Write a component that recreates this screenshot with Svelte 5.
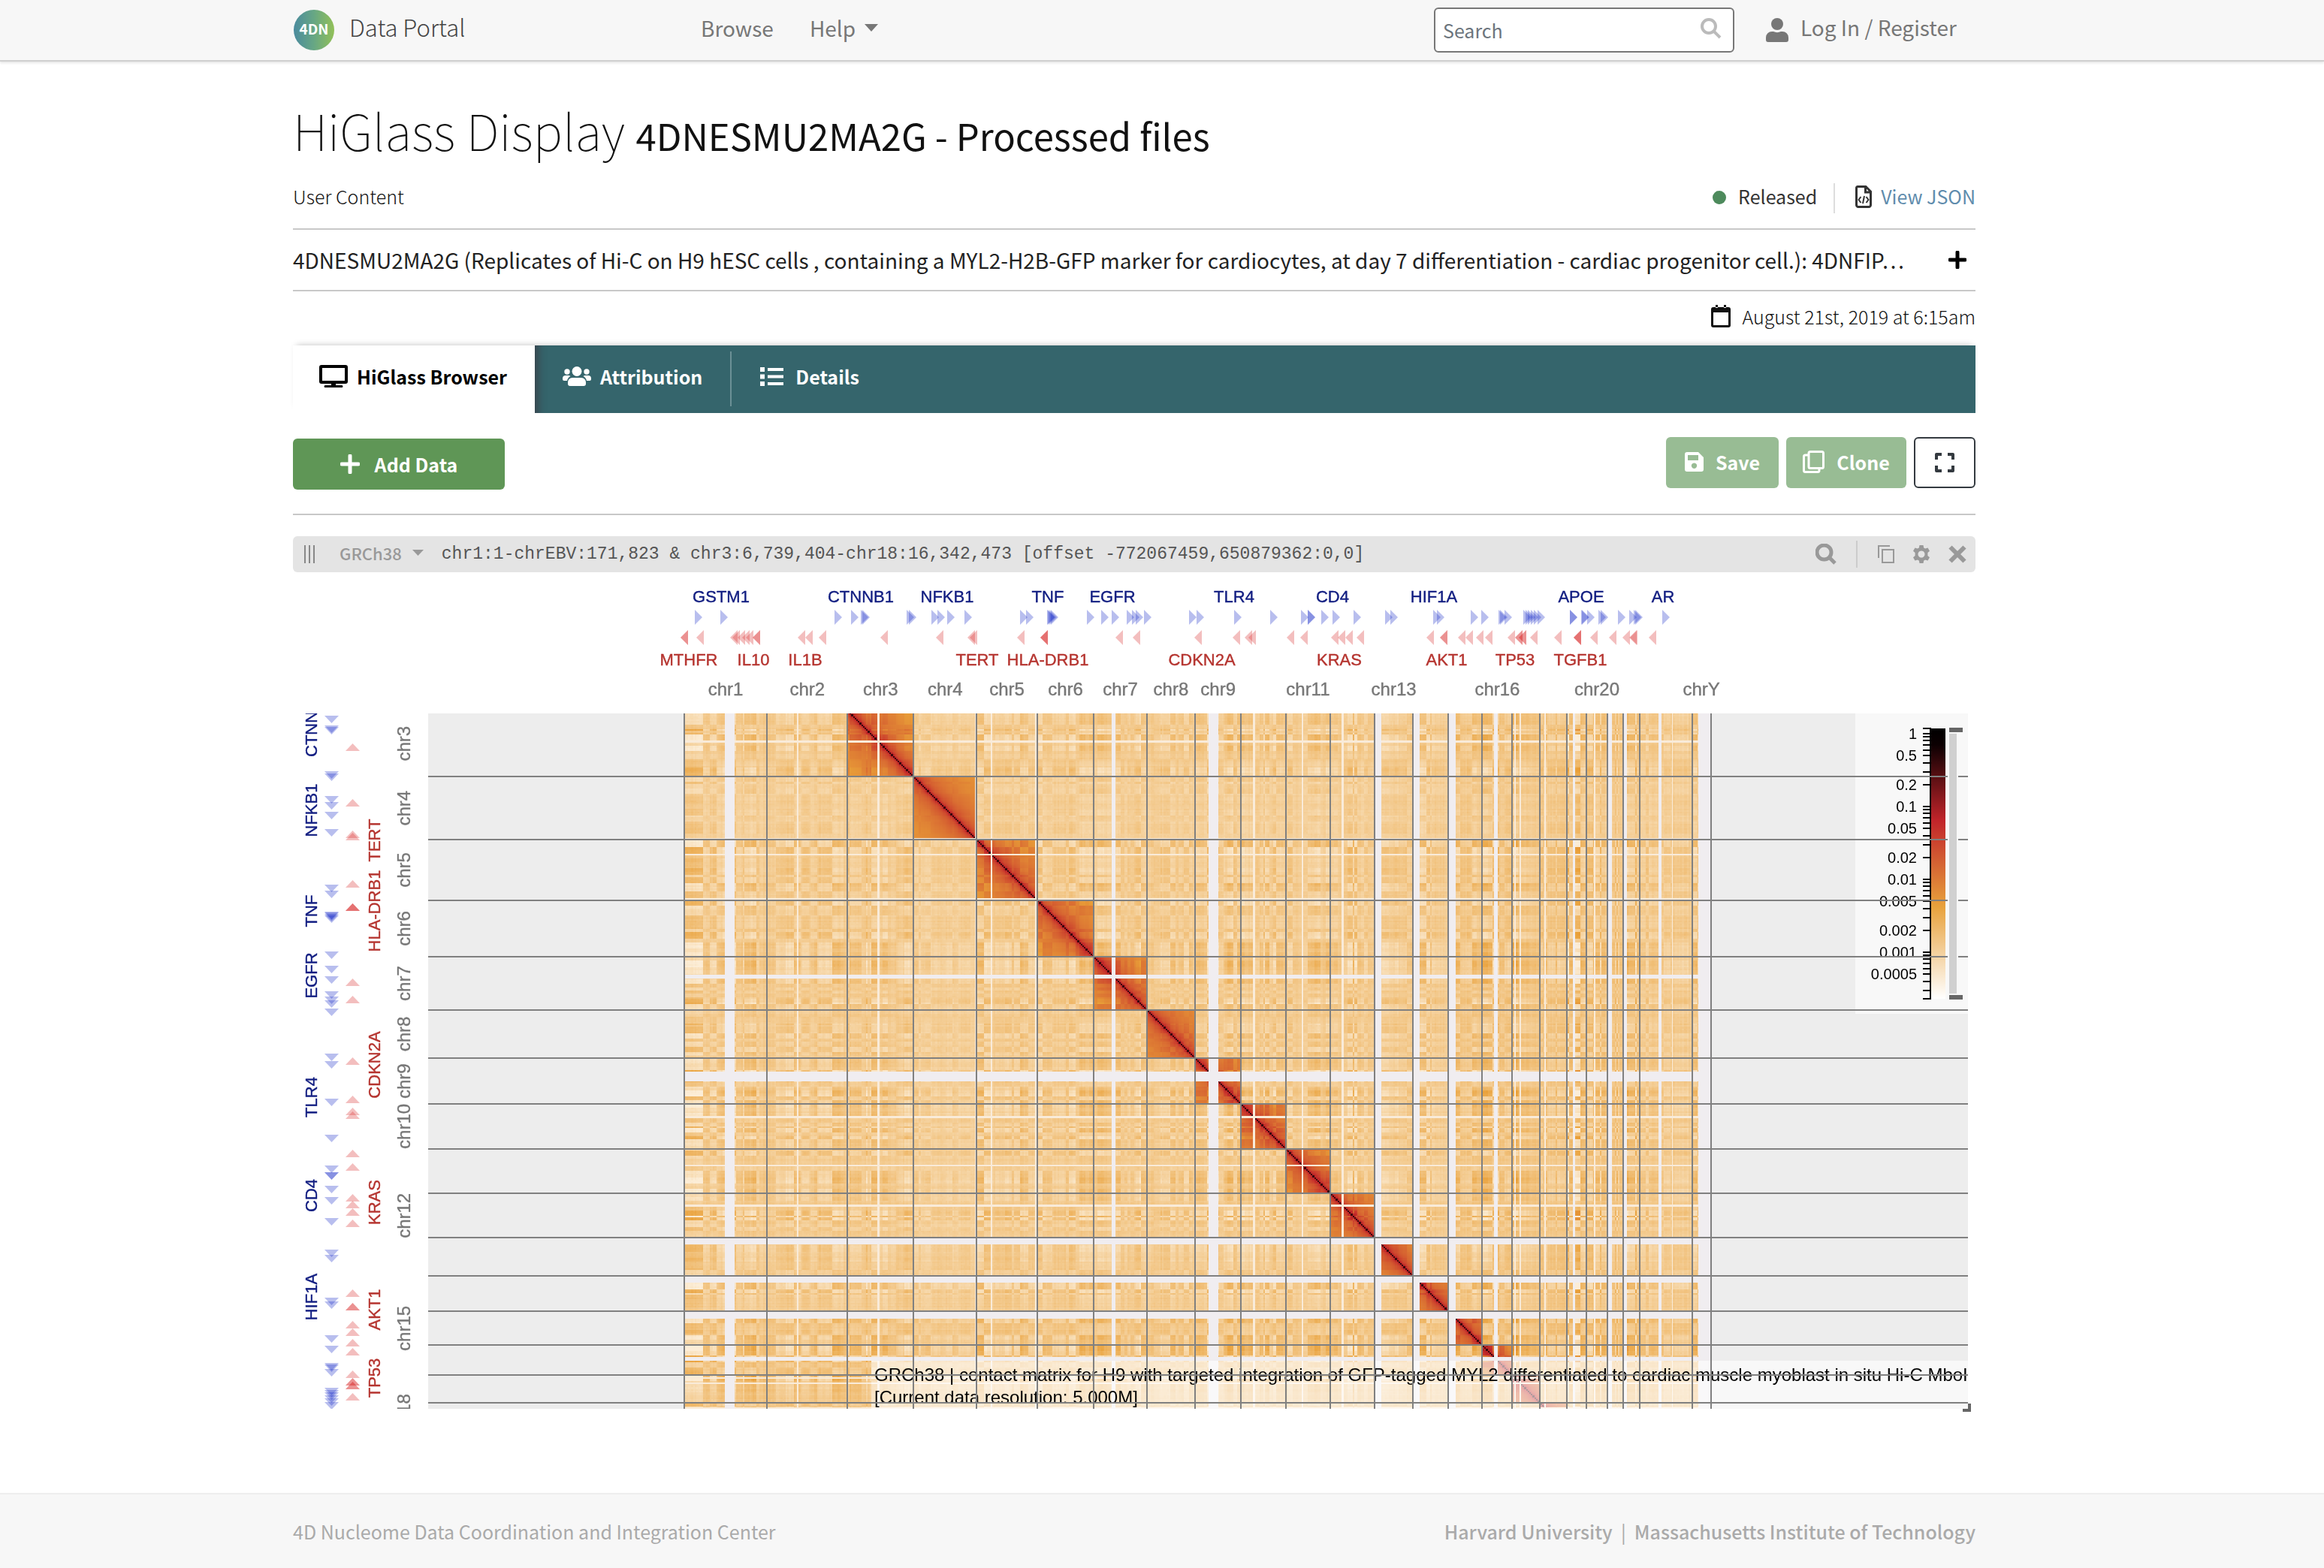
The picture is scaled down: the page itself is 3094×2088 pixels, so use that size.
<script>
  import { onMount } from 'svelte';

  // Chromosome lengths in megabases (GRCh38), chr1 … chr22, X, Y
  const names = ['1','2','3','4','5','6','7','8','9','10','11','12','13','14','15','16','17','18','19','20','21','22','X','Y'];
  const sizes = [248.96, 242.19, 198.3, 190.21, 181.54, 170.81, 159.35, 145.14, 138.39, 133.8, 135.09, 133.28, 114.36, 107.04, 101.99, 90.34, 83.26, 80.37, 58.62, 64.44, 46.71, 50.82, 156.04, 57.23];
  const SCALE = 0.4426;
  const X0 = 521;
  const SHIFT = 554;
  const area = { left: 180, right: 2230, top: 188, bottom: 1114 };

  let at = X0;
  const chroms = sizes.map((mb, i) => {
    const start = at;
    at += mb * SCALE;
    return { name: 'chr' + names[i], start, end: at, mid: (start + at) / 2 };
  });
  const vLines = [X0, ...chroms.map((c) => c.end)].map(Math.round);
  const hLines = vLines.map((v) => v - SHIFT).filter((v) => v > area.top && v < area.bottom);
  const topNames = [1, 2, 3, 4, 5, 6, 7, 8, 9, 11, 13, 16, 20, 24].map((n) => chroms[n - 1]);
  const leftNames = [3, 4, 5, 6, 7, 8, 9, 10, 12, 15, 18].map((n) => chroms[n - 1]);

  const plus = [535,569,721,743,756,758,817,820,850,858,871,894,968,976,1004,1005,1007,1009,1057,1076,1090,1110,1117,1122,1133,1193,1203,1253,1301,1342,1351,1351,1369,1384,1412,1454,1461,1518,1523,1568,1582,1605,1607,1613,1638,1641,1644,1648,1652,1657,1700,1700,1715,1716,1723,1738,1741,1764,1779,1785,1787,1823];
  const minus = [516,516,537,582,585,592,598,603,612,612,672,682,700,782,856,898,901,964,995,995,995,1095,1118,1200,1251,1267,1272,1323,1341,1382,1391,1401,1416,1509,1527,1527,1551,1561,1575,1587,1617,1627,1627,1632,1632,1647,1679,1705,1705,1705,1727,1752,1770,1779,1780,1805];
  const plusGenes = [['GSTM1',570],['CTNNB1',756],['NFKB1',871],['TNF',1005],['EGFR',1091],['TLR4',1253],['CD4',1384],['HIF1A',1519],['APOE',1715],['AR',1824]];
  const minusGenes = [['MTHFR',527],['IL10',613],['IL1B',682],['TERT',911],['HLA-DRB1',1005],['CDKN2A',1210],['KRAS',1393],['AKT1',1536],['TP53',1627],['TGFB1',1714]];

  // Unmappable stretches: [from, to, wide]
  const gaps = [[575,588,1],[671,673,0],[778,781,0],[908,911,0],[929,931,0],[988,990,0],[1090,1095,1],[1219,1232,1],[1278,1281,0],[1343,1345,0],[1396,1399,0],[1441,1449,1],[1491,1500,1],[1539,1548,1],[1599,1604,1],[1626,1628,0],[1633,1635,0],[1666,1668,0],[1704,1707,1],[1732,1734,0],[1751,1756,1],[1771,1776,1],[1818,1822,1],[1836,1837,0],[1871,1888,1]];

  // Colour bar: logarithmic ticks, one decade is 97 units high
  const tickY = (v) => 215 - Math.log10(v) * 97;
  const ticks = [208];
  for (let k = -4; k <= -1; k++) for (let m = 1; m < 10; m++) {
    const v = m * 10 ** k;
    if (v > 0.00024) ticks.push(tickY(v));
  }
  ticks.push(215, 568);
  const legend = ['1', '0.5', '0.2', '0.1', '0.05', '0.02', '0.01', '0.005', '0.002', '0.001', '0.0005'];

  const stops = [[255, 251, 243], [233, 160, 56], [196, 40, 42], [20, 0, 4]];
  function shade(t) {
    const p = Math.min(0.999, Math.max(0, t)) * 3;
    const k = Math.floor(p);
    return stops[k].map((c, n) => c + (stops[k + 1][n] - c) * (p - k));
  }
  function random(seed) {
    return () => {
      seed = (seed + 0x6d2b79f5) | 0;
      let t = Math.imul(seed ^ (seed >>> 15), 1 | seed);
      t = (t + Math.imul(t ^ (t >>> 7), 61 | t)) ^ t;
      return ((t ^ (t >>> 14)) >>> 0) / 4294967296;
    };
  }

  let canvas;
  onMount(() => {
    const rnd = random(41);
    const bins = [];
    chroms.forEach((c, k) => {
      const count = Math.ceil(sizes[k] / 5);
      const strength = [0.9, 0.75, 1, 0.35, 0.9, 0.75, 0.9, 0.6, 1, 0.85, 1, 1, 0.6, 0.8, 0.9, 1.3, 1.3, 0.6, 1.7, 1.1, 0.8, 1.5, 0.6, 0.7][k];
      let value = 0;
      let left = 0;
      for (let b = 0; b < count; b++) {
        if (left-- <= 0) {
          value = (rnd() * 1.5 + 0.2) * (rnd() > 0.5 ? 1 : -1) * strength;
          left = Math.floor(rnd() * 4);
        }
        const rich = k === 0 && b < 11;
        bins.push({ k, b, count, c: rich ? 1.9 : value, tilt: (rnd() - 0.5) * 0.022 + (k > 13 && k < 22 ? 0.016 : 0) + (k === 3 ? -0.01 : 0) });
      }
    });
    const n = bins.length;
    const table = new Array(n * n);
    for (let i = 0; i < n; i++) for (let j = i; j < n; j++) {
      const a = bins[i];
      const d = bins[j];
      let t;
      if (a.k === d.k) {
        const dist = j - i;
        t = dist === 0 ? 0.93 : dist === 1 ? 0.68 : 0.66 - 0.079 * Math.log(dist) + 0.034 * a.c * d.c;
      } else {
        t = 0.174 + 0.044 * a.c * d.c + a.tilt + d.tilt + (rnd() - 0.5) * 0.014;
        t = Math.max(0.05, t);
      }
      table[i * n + j] = table[j * n + i] = shade(t);
    }
    const lookup = [];
    const gapAt = [];
    for (let x = 0; x < 2240; x++) {
      const k = chroms.findIndex((c) => x >= c.start && x < c.end);
      if (k >= 0) {
        const first = bins.findIndex((bin) => bin.k === k);
        lookup[x] = first + Math.min(bins[first].count - 1, Math.floor((x - chroms[k].start) / SCALE / 5));
      } else lookup[x] = -1;
      const gap = gaps.find((g) => x >= g[0] && x < g[1]);
      gapAt[x] = gap ? 1 + gap[2] : 0;
    }
    const ctx = canvas.getContext('2d');
    const image = ctx.createImageData(canvas.width, canvas.height);
    for (let y = area.top; y < area.bottom; y++) for (let x = area.left; x < area.right; x++) {
      const i = lookup[x];
      const yy = y + SHIFT;
      const j = lookup[yy];
      const g = Math.max(gapAt[x], gapAt[yy]);
      let rgb = [237, 237, 237];
      if (i >= 0 && j >= 0) rgb = g === 2 ? [240, 237, 240] : g === 1 ? [249, 235, 217] : table[i * n + j];
      const p = (y * canvas.width + x) * 4;
      image.data[p] = rgb[0];
      image.data[p + 1] = rgb[1];
      image.data[p + 2] = rgb[2];
      image.data[p + 3] = 255;
    }
    ctx.putImageData(image, 0, 0);
  });
</script>

<header>
  <div class="wrap bar">
    <a class="brand" href="#home">
      <span class="logo">4DN</span>
      <span>Data Portal</span>
    </a>
    <nav>
      <a href="#browse">Browse</a>
      <a href="#help">Help <svg width="18" height="10" viewBox="0 0 18 10"><path d="M0 0h18l-9 10z" /></svg></a>
    </nav>
    <form class="search">
      <input type="text" placeholder="Search" aria-label="Search" />
      <svg width="28" height="28" viewBox="0 0 28 28"><circle cx="11" cy="11" r="9" /><path d="M18 18l8 8" /></svg>
    </form>
    <a class="login" href="#login">
      <svg width="30" height="32" viewBox="0 0 30 32"><circle cx="15" cy="8" r="8" /><path d="M8 18h2a12 12 0 0 0 10 0h2a8 8 0 0 1 8 8v3a3 3 0 0 1-3 3H3a3 3 0 0 1-3-3v-3a8 8 0 0 1 8-8z" /></svg>
      <span>Log In / Register</span>
    </a>
  </div>
</header>

<main class="wrap">
  <h1>HiGlass Display <small>4DNESMU2MA2G - Processed files</small></h1>
  <div class="meta">
    <span class="kind">User Content</span>
    <span class="status"><i></i>Released</span>
    <a class="json" href="#json">
      <svg width="22" height="30" viewBox="0 0 22 30"><path d="M3 1.5h11l6.500 6.500v18a2.500 2.500 0 0 1-2.500 2.500H4A2.500 2.500 0 0 1 1.500 26V3A1.500 1.500 0 0 1 3 1.500zM13.500 2v7h7" /><path class="thin" d="M7.500 15l-3 4 3 4M14.500 15l3 4-3 4M12 14l-2 10" /></svg>
      View JSON
    </a>
  </div>
  <div class="summary">
    <p>4DNESMU2MA2G (Replicates of Hi-C on H9 hESC cells , containing a MYL2-H2B-GFP marker for cardiocytes, at day 7 differentiation - cardiac progenitor cell.): 4DNFIP…</p>
    <button aria-label="Expand description"><svg width="24" height="24" viewBox="0 0 24 24"><path d="M12 2v20M2 12h20" /></svg></button>
  </div>
  <div class="date">
    <svg width="26" height="30" viewBox="0 0 26 30"><path d="M3 3h20a3 3 0 0 1 3 3v21a3 3 0 0 1-3 3H3a3 3 0 0 1-3-3V6a3 3 0 0 1 3-3zM3 10v17h20V10zM6 0h3v4H6zM17 0h3v4h-3z" fill-rule="evenodd" /></svg>
    August 21st, 2019 at 6:15am
  </div>

  <nav class="tabs">
    <a class="active" href="#browser">
      <svg width="38" height="30" viewBox="0 0 38 30"><path d="M3 0h32a3 3 0 0 1 3 3v19a3 3 0 0 1-3 3H22v2h8a1.500 1.500 0 0 1 0 3H8a1.500 1.500 0 0 1 0-3h8v-2H3a3 3 0 0 1-3-3V3a3 3 0 0 1 3-3zM4 4v17h30V4z" fill-rule="evenodd" /></svg>
      HiGlass Browser
    </a>
    <a class="people" href="#attribution">
      <svg width="38" height="26" viewBox="0 0 38 26"><circle cx="19" cy="6.500" r="6.500" /><circle cx="6" cy="7" r="3.700" /><circle cx="32" cy="7" r="3.700" /><path d="M13 15h12a6 6 0 0 1 6 6v2a3 3 0 0 1-3 3H10a3 3 0 0 1-3-3v-2a6 6 0 0 1 6-6zM4 12h4a4 4 0 0 1 2.500 1A9 9 0 0 0 6 19H2a2 2 0 0 1-2-2v-1a4 4 0 0 1 4-4zM34 12h-4a4 4 0 0 0-2.500 1A9 9 0 0 1 32 19h4a2 2 0 0 0 2-2v-1a4 4 0 0 0-4-4z" /></svg>
      Attribution
    </a>
    <a class="list" href="#details">
      <svg width="31" height="25" viewBox="0 0 31 25"><path d="M0 0h6v6H0zM0 9.500h6v6H0zM0 19h6v6H0zM10 1h21v4H10zM10 10.500h21v4H10zM10 20h21v4H10z" /></svg>
      Details
    </a>
  </nav>

  <div class="actions">
    <button class="add"><svg width="26" height="26" viewBox="0 0 26 26"><path d="M13 2v22M2 13h22" /></svg>Add Data</button>
    <button class="pale save"><svg width="25" height="26" viewBox="0 0 25 26"><path d="M3 0h15l7 7v16a3 3 0 0 1-3 3H3a3 3 0 0 1-3-3V3a3 3 0 0 1 3-3zM4 4v7h14V4zM12.500 14.500a3.700 3.700 0 1 0 .01 0z" fill-rule="evenodd" /></svg>Save</button>
    <button class="pale clone"><svg width="29" height="30" viewBox="0 0 29 30"><rect x="8" y="1.500" width="19.500" height="22" rx="2" /><path d="M8 6H3.500a2 2 0 0 0-2 2v18.500a2 2 0 0 0 2 2H20a2 2 0 0 0 2-2v-3" /></svg>Clone</button>
    <button class="full" aria-label="Fullscreen"><svg width="26" height="26" viewBox="0 0 26 26"><path d="M2 9V2h7M17 2h7v7M24 17v7h-7M9 24H2v-7" /></svg></button>
  </div>

  <div class="view">
    <svg width="14" height="24" viewBox="0 0 14 24"><path d="M1 0v24M7 0v24M13 0v24" /></svg>
    <button class="genome">GRCh38 <svg width="15" height="8" viewBox="0 0 15 8"><path d="M0 0h15l-7.500 8z" /></svg></button>
    <input type="text" aria-label="Genome position" value="chr1:1-chrEBV:171,823 & chr3:6,739,404-chr18:16,342,473 [offset -772067459,650879362:0,0]" />
    <button class="find" aria-label="Go"><svg width="28" height="28" viewBox="0 0 28 28"><circle cx="11.500" cy="11.500" r="9.500" /><path d="M19 19l7 7" /></svg></button>
    <div class="tools">
      <button aria-label="Copy view"><svg width="22" height="24" viewBox="0 0 22 24"><path class="line" d="M6 6h15v17H6zM1 17V1h15" /></svg></button>
      <button aria-label="Settings"><svg width="24" height="24" viewBox="0 0 24 24"><path d="M9.500 0h5l.7 3.400 2 1.100 3.300-1.100 2.500 4.300-2.600 2.300v4l2.600 2.300-2.500 4.300-3.300-1.100-2 1.100-.7 3.400h-5l-.7-3.400-2-1.100-3.300 1.100L1 16.300 3.600 14v-4L1 7.700l2.500-4.300 3.300 1.100 2-1.100zM12 7.500a4.500 4.500 0 1 0 .01 0z" fill-rule="evenodd" /></svg></button>
      <button aria-label="Close view"><svg width="24" height="24" viewBox="0 0 24 24"><path class="cross" d="M2.500 2.500l19 19M21.500 2.500l-19 19" /></svg></button>
    </div>
  </div>

  <div class="plot">
    <canvas bind:this={canvas} width="2240" height="1126"></canvas>
    <svg viewBox="0 0 2240 1126">
      <defs>
        <linearGradient id="heat" x1="0" y1="0" x2="0" y2="1">
          <stop offset="0" stop-color="#000" />
          <stop offset="0.060" stop-color="#0c0002" />
          <stop offset="0.340" stop-color="#c1242a" />
          <stop offset="0.660" stop-color="#e8a23c" />
          <stop offset="1" stop-color="#fff" />
        </linearGradient>
        <clipPath id="rows"><rect x="0" y="188" width="180" height="926" /></clipPath>
        <clipPath id="matrix"><rect x="180" y="188" width="2050" height="926" /></clipPath>
      </defs>

      {#each plus as x}<path class="fwd" d="M{x} 50v20l10-10z" />{/each}
      {#each minus as x}<path class="rev" d="M{x + 10} 77v20l-10-10z" />{/each}
      {#each plusGenes as [name, x]}<text class="gene blue" {x} y="40">{name}</text>{/each}
      {#each minusGenes as [name, x]}<text class="gene red" {x} y="124">{name}</text>{/each}
      {#each topNames as c}<text class="chr" x={c.mid} y="164">{c.name}</text>{/each}

      <g clip-path="url(#rows)">
        {#each plus as x}<path class="fwd" d="M42 {x - SHIFT + 2}h19l-9.500 10z" />{/each}
        {#each minus as x}<path class="rev" d="M70 {x - SHIFT + 10}h19l-9.500-10z" />{/each}
        {#each plusGenes as [name, x]}<text class="gene blue" transform="translate(32 {x - SHIFT}) rotate(-90)">{name}</text>{/each}
        {#each minusGenes as [name, x]}<text class="gene red" transform="translate(116 {x - SHIFT}) rotate(-90)">{name}</text>{/each}
        {#each leftNames as c}<text class="chr" transform="translate(156 {c.mid - SHIFT}) rotate(-90)">{c.name}</text>{/each}
      </g>

      <g clip-path="url(#matrix)">
        <rect class="veil" x="2080" y="188" width="150" height="400" />
        {#each legend as label}<text class="value" x="2162" y={tickY(Number(label)) + 7}>{label}</text>{/each}
        <rect x="2180" y="208" width="20" height="360" fill="url(#heat)" />
        {#each ticks as y}<path class="tick" d="M2170 {Math.round(y)}h10" />{/each}
        <path class="tick" d="M2180 207v362" />
        <rect class="veil" x="770" y="1050" width="1460" height="64" />
        <text class="caption" x="774" y="1077">GRCh38 | contact matrix for H9 with targeted integration of GFP-tagged MYL2 differentiated to cardiac muscle myoblast in situ Hi-C MboI</text>
        <text class="caption" x="774" y="1107">[Current data resolution: 5.000M]</text>
        {#each vLines as x}<path class="grid" d="M{x} 188v926" />{/each}
        {#each hLines as y}<path class="grid" d="M180 {y}h2050" />{/each}
        <rect x="2203" y="213" width="14" height="350" fill="#f8f8f8" />
        <rect x="2205" y="215" width="10" height="346" fill="#d0d0d0" />
        <path d="M2205 207h18v6h-18zM2205 563h18v6h-18z" fill="#666" />
      </g>
      <path d="M2230 1107h4v11h-11v-4h7z" fill="#666" />
    </svg>
  </div>
</main>

<footer>
  <div class="wrap foot">
    <a href="#dcic">4D Nucleome Data Coordination and Integration Center</a>
    <span><a class="strong" href="#harvard">Harvard University</a> &nbsp;|&nbsp; <a class="strong" href="#mit">Massachusetts Institute of Technology</a></span>
  </div>
</footer>

<style>
  :global(body) {
    background: #fff;
    font-family: 'Noto Sans CJK SC', 'Open Sans', sans-serif;
    font-size: 25px;
    line-height: 34px;
    color: #111;
  }
  a { color: inherit; text-decoration: none; }
  button { font: inherit; color: inherit; background: none; border: 0; padding: 0; cursor: pointer; display: flex; align-items: center; }
  svg { display: block; flex: none; fill: currentColor; }
  p, h1 { margin: 0; }
  header, footer { background: #f7f7f7; padding-right: 74px; }
  header { border-bottom: 2px solid #d0d0d0; box-shadow: 0 2px 3px rgba(0, 0, 0, 0.1); }
  .wrap { max-width: 2240px; margin: 0 auto; }
  main { padding: 50px 74px 100px 0; }
  main.wrap { box-sizing: content-box; }

  .bar { display: flex; height: 80px; line-height: 72px; font-size: 28px; color: #777; font-weight: 400; }
  .brand { display: flex; gap: 20px; width: 543px; font-size: 31px; font-weight: 300; color: #444; }
  .logo { width: 54px; height: 54px; margin: 13px 0 0 1px; border-radius: 50%; background: linear-gradient(90deg, #4b8b9e, #67a784 50%, #92c058); color: #fff; font-size: 19px; font-weight: 700; line-height: 50px; text-align: center; }
  .bar nav { display: flex; gap: 48px; flex: 1; }
  .bar nav a { display: flex; align-items: center; gap: 12px; height: 74px; }
  .search { display: flex; align-items: center; box-sizing: border-box; width: 400px; height: 60px; margin: 10px 42px 0 0; padding: 0 15px 0 10px; border: 2px solid #777; border-radius: 6px; background: #fff; }
  .search input { flex: 1; min-width: 0; border: 0; padding: 0; background: none; font: inherit; font-size: 25px; line-height: 34px; outline: 0; }
  .search input::placeholder { color: #6c757d; opacity: 1; }
  .search svg { fill: none; stroke: #bbb; stroke-width: 4; margin-bottom: 4px; }
  .login { display: flex; gap: 16px; width: 279px; }
  .login svg { margin-top: 24px; }

  h1 { font-size: 66px; line-height: 80px; font-weight: 100; color: #111; }
  h1 small { font-size: 49px; line-height: 50px; font-weight: 400; }
  .meta { display: flex; height: 40px; margin-top: 32px; padding-bottom: 20px; border-bottom: 2px solid #c8c8c8; }
  .kind { flex: 1; font-weight: 300; }
  .status { display: flex; gap: 16px; padding-right: 22px; border-right: 2px solid #ddd; color: #333; }
  .status i { width: 18px; height: 18px; margin-top: 10px; border-radius: 50%; background: #4d8a5c; }
  .json { display: flex; gap: 12px; padding-left: 27px; color: #5f8cad; }
  .json svg { fill: none; stroke: #333; stroke-width: 3; margin-top: 3px; }
  .json .thin { stroke-width: 2; }
  .summary { display: flex; align-items: center; justify-content: space-between; gap: 20px; height: 80px; border-bottom: 2px solid #c8c8c8; font-size: 28px; color: #222; }
  .summary p { white-space: nowrap; overflow: hidden; text-overflow: ellipsis; line-height: 44px; }
  .summary button { padding-right: 12px; color: #000; }
  .summary svg { stroke: currentColor; stroke-width: 5; stroke-linecap: round; }
  .date { display: flex; align-items: center; justify-content: flex-end; gap: 16px; height: 66px; padding-bottom: 6px; font-weight: 300; }

  .tabs { display: flex; height: 90px; background: #35656c; color: #fff; font-size: 25px; font-weight: 700; box-shadow: 0 -5px 8px -5px rgba(0, 0, 0, 0.25); }
  .tabs a { position: relative; display: flex; align-items: center; gap: 12px; padding: 0 37px 8px; }
  .tabs .active { background: #fff; color: #000; padding-left: 35px; }
  .tabs .people { box-shadow: inset 14px 0 12px -10px rgba(60, 50, 60, 0.7); }
  .tabs .list { gap: 16px; padding-left: 40px; }
  .tabs .list::before { content: ''; position: absolute; left: 0; top: 8px; height: 73px; border-left: 2px solid #6b9096; }

  .actions { display: flex; gap: 10px; padding: 32px 0 34px; border-bottom: 2px solid #c8c8c8; font-size: 25px; font-weight: 700; color: #fff; }
  .actions button { height: 68px; border-radius: 6px; justify-content: center; }
  .add { width: 282px; margin: 2px auto -2px 0; gap: 20px; background: #5f9656; }
  .add svg { stroke: #fff; stroke-width: 5; stroke-linecap: round; }
  .pale { background: #98bc94; gap: 16px; padding-bottom: 2px; }
  .save { width: 150px; }
  .clone { width: 160px; }
  .clone svg { fill: none; stroke: #fff; stroke-width: 3; }
  .actions .full { width: 82px; border: 2px solid #343a40; }
  .full svg { fill: none; stroke: #343a40; stroke-width: 4; stroke-linejoin: round; }

  .view { display: flex; align-items: center; height: 48px; margin-top: 28px; padding: 0 12px 0 15px; border-radius: 6px; background: #e4e4e4; color: #999; }
  .view > svg { stroke: #888; stroke-width: 2; }
  .genome { gap: 14px; margin-left: 33px; font-size: 22px; font-weight: 500; padding-bottom: 4px; line-height: 30px; }
  .view input { flex: 1; min-width: 0; margin-left: 24px; border: 0; padding: 0; background: none; font-family: 'Liberation Mono', monospace; font-size: 23px; line-height: 30px; color: #555; outline: 0; }
  .find svg { fill: none; stroke: #999; stroke-width: 5; }
  .tools { display: flex; align-items: center; gap: 24px; height: 36px; margin-left: 26px; padding-left: 27px; border-left: 2px solid #ccc; }
  .tools .line { fill: none; stroke: #999; stroke-width: 2; }
  .tools .cross { stroke: #999; stroke-width: 6; }

  .plot { display: grid; }
  .plot > canvas, .plot > svg { grid-area: 1 / 1; width: 100%; height: auto; }
  .plot text { font-family: 'Liberation Sans', Arial, sans-serif; }
  .fwd { fill: rgba(20, 40, 200, 0.3); }
  .rev { fill: rgba(215, 40, 40, 0.3); }
  .gene { font-size: 22px; text-anchor: middle; stroke-width: 0.4px; }
  .blue { fill: #101c80; stroke: #101c80; }
  .red { fill: #b5342f; stroke: #b5342f; }
  .chr { font-size: 24px; text-anchor: middle; fill: #777; stroke: #777; stroke-width: 0.4px; }
  .value { font-size: 20px; text-anchor: end; fill: #000; }
  .caption { font-size: 24px; fill: #000; }
  .veil { fill: rgba(255, 255, 255, 0.6); }
  .tick { stroke: #000; stroke-width: 2; }
  .grid { stroke: #808080; stroke-width: 2; }

  footer { border-top: 2px solid #eee; }
  .foot { display: flex; justify-content: space-between; height: 98px; font-size: 25px; line-height: 98px; color: #aaa; }
  .strong { font-weight: 500; }
</style>
